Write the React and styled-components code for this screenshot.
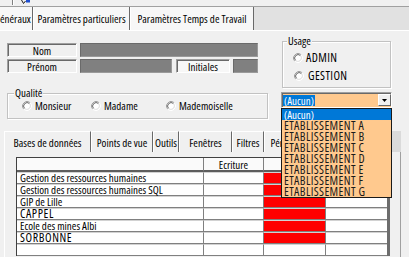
import React from "react";
import styled, { createGlobalStyle } from "styled-components";

const GlobalStyle = createGlobalStyle`
  html, body { margin: 0; padding: 0; background: #f0f0f0; }
  body { font-family: "Open Sans", "Liberation Sans", sans-serif; }
`;

const Frame = styled.div`
  width: 409px;
  height: 257px;
  overflow: hidden;
  background: #f0f0f0;
  font-family: "Open Sans", "Liberation Sans", sans-serif;
  font-stretch: 75%;
  font-size: 11px;
  color: #000;
  display: flex;
  flex-direction: column;
`;

/* upper-case labels: the original bitmap font has wide capitals */
const Caps = styled.span`
  font-size: 12px;
  letter-spacing: ${(p) => p.ls ?? 0.4}px;
`;

/* ---------- top toolbar remnant ---------- */
const Toolbar = styled.div`
  flex: none;
  height: 6px;
  border-bottom: 1px solid #a0a0a0;
  display: flex;
  align-items: flex-start;
  padding-left: 12px;
  gap: 7px;
`;
const ToolSep = styled.div`
  width: 1px;
  height: 5px;
  background: #808080;
  border-right: 1px solid #fff;
`;
const ToolIcon = styled.svg`
  display: block;
`;

/* ---------- top tabs ---------- */
const TabStrip = styled.div`
  flex: none;
  height: 23px;
  display: flex;
  background: #e1e1e1;
  margin-left: -8px;
`;
const TopTab = styled.div`
  width: ${(p) => p.w}px;
  box-sizing: border-box;
  display: flex;
  align-items: center;
  justify-content: center;
  white-space: nowrap;
  background: #f7f7f7;
  border-left: 1px solid #fff;
  border-right: 1px solid #696969;
`;

/* ---------- main panel ---------- */
const Panel = styled.div`
  flex: 1;
  border-top: 1px solid #fff;
  display: flex;
  flex-direction: column;
  min-height: 0;
`;
const Upper = styled.div`
  flex: none;
  height: 88px;
  display: flex;
  align-items: flex-start;
`;
const LeftCol = styled.div`
  margin-left: 7px;
  width: 261px;
  padding-top: 12px;
  display: flex;
  flex-direction: column;
`;
const RightCol = styled.div`
  margin-left: 13px;
  width: 111px;
  padding-top: 10px;
  display: flex;
  flex-direction: column;
`;

const FieldRow = styled.div`
  display: flex;
  height: 14px;
  gap: 3px;
  & + & {
    margin-top: 2px;
  }
`;
const LabelBox = styled.div`
  width: ${(p) => p.w}px;
  margin-left: ${(p) => p.ml || 0}px;
  box-sizing: border-box;
  border-top: 1px solid #a0a0a0;
  border-left: 1px solid #a0a0a0;
  border-right: 1px solid #fff;
  border-bottom: 1px solid #fff;
  box-shadow: inset 1px 1px 0 #696969;
  background: ${(p) => (p.light ? "#f7f7f7" : "#f0f0f0")};
  display: flex;
  align-items: center;
  justify-content: center;
  line-height: 11px;
  white-space: nowrap;
`;
const GrayField = styled.div`
  width: ${(p) => p.w}px;
  margin-left: ${(p) => p.ml || 0}px;
  box-sizing: border-box;
  background: #808080;
  border-top: 1px solid #6a6a6a;
  border-left: 1px solid #6a6a6a;
  border-right: 1px solid #9a9a9a;
  border-bottom: 1px solid #9a9a9a;
`;

/* ---------- group boxes ---------- */
const GroupBox = styled.div`
  position: relative;
  box-sizing: border-box;
  border: 1px solid #c2c2c2;
  box-shadow: inset 1px 1px 0 #fff, 1px 1px 0 #fff;
`;
const GroupTitle = styled.span`
  position: absolute;
  top: -7px;
  left: ${(p) => p.l}px;
  padding: 0 1px;
  background: #f0f0f0;
  line-height: 12px;
  white-space: nowrap;
`;
const QualiteBox = styled(GroupBox)`
  margin-top: 20px;
  height: 26px;
  display: flex;
  align-items: center;
  padding: 0 0 1px 14px;
`;
const UsageBox = styled(GroupBox)`
  margin: 0 1px;
  height: 47px;
  padding: 9px 0 0 10px;
  display: flex;
  flex-direction: column;
  gap: 4px;
`;
const RadioOption = styled.div`
  display: flex;
  align-items: center;
  height: 14px;
  line-height: 14px;
  gap: ${(p) => p.gap || 3}px;
  width: ${(p) => (p.w ? `${p.w}px` : "auto")};
  margin-left: ${(p) => p.ml || 0}px;
  white-space: nowrap;
  flex: none;
`;
const RadioSvg = styled.svg`
  flex: none;
  display: block;
`;

function Radio() {
  return (
    <RadioSvg width="10" height="10" viewBox="0 0 10 10">
      <circle cx="5" cy="5" r="3.2" fill="#fff" />
      <path d="M1.82 8.18A4.5 4.5 0 0 1 8.18 1.82" fill="none" stroke="#a0a0a0" />
      <path d="M2.53 7.47A3.5 3.5 0 0 1 7.47 2.53" fill="none" stroke="#696969" />
      <path d="M8.18 1.82A4.5 4.5 0 0 1 1.82 8.18" fill="none" stroke="#ffffff" />
      <path d="M7.47 2.53A3.5 3.5 0 0 1 2.53 7.47" fill="none" stroke="#e3e3e3" />
    </RadioSvg>
  );
}

/* ---------- combo ---------- */
const ComboWrap = styled.div`
  position: relative;
  margin-top: 4px;
  z-index: 5;
`;
const Combo = styled.div`
  height: 16px;
  box-sizing: border-box;
  border-top: 1px solid #a0a0a0;
  border-left: 1px solid #a0a0a0;
  border-right: 1px solid #fff;
  border-bottom: 1px solid #fff;
  box-shadow: inset 1px 1px 0 #696969;
  background: #ffc98e;
  display: flex;
  align-items: center;
  padding: 0 0 0 1px;
`;
const Selected = styled.span`
  background: #0078d7;
  color: #fff;
  height: 11px;
  line-height: 11px;
  padding: 0 1px;
  white-space: nowrap;
`;
const ComboButton = styled.div`
  margin-left: auto;
  width: 13px;
  height: 12px;
  box-sizing: border-box;
  background: #f0f0f0;
  border-top: 1px solid #fff;
  border-left: 1px solid #fff;
  border-right: 1px solid #696969;
  border-bottom: 1px solid #696969;
  display: flex;
  align-items: center;
  justify-content: center;
`;
const DropList = styled.div`
  position: absolute;
  top: 100%;
  left: 0;
  width: 111px;
  box-sizing: border-box;
  border: 1px solid #1a1a1a;
  background: #ffc98e;
  display: flex;
  flex-direction: column;
`;
const DropItem = styled.div`
  height: 11px;
  line-height: 11px;
  padding-left: 2px;
  white-space: nowrap;
  background: ${(p) => (p.active ? "#0078d7" : "transparent")};
  color: ${(p) => (p.active ? "#fff" : "#1a1a1a")};
`;

/* ---------- inner tabs ---------- */
const InnerTabStrip = styled.div`
  flex: none;
  margin: 12px 0 0 4px;
  width: 397px;
  height: 21px;
  display: flex;
  background: #dadada;
`;
const InnerTab = styled.div`
  width: ${(p) => p.w}px;
  box-sizing: border-box;
  flex: none;
  display: flex;
  align-items: center;
  justify-content: center;
  white-space: nowrap;
  background: #f0f0f0;
  border-top: 1px solid #fff;
  border-left: 1px solid #fff;
  border-right: 1px solid #696969;
`;
const InnerPanel = styled.div`
  flex: 1;
  margin-left: 4px;
  width: 397px;
  box-sizing: border-box;
  border-left: 1px solid #fff;
  border-right: 1px solid #a0a0a0;
  padding: 5px 0 0 11px;
`;

/* ---------- grid ---------- */
const Grid = styled.div`
  display: grid;
  grid-template-columns: 187px 60px 62px 61px;
  width: 374px;
  box-sizing: border-box;
  border-left: 1px solid #404040;
  border-top: 1px solid #404040;
  border-right: 3px solid #6d6d6d;
`;
const HeadCell = styled.div`
  height: 14px;
  box-sizing: border-box;
  background: #fafafa;
  border-bottom: 2px solid #5e5e5e;
  border-right: ${(p) => (p.last ? "none" : "1px solid #808080")};
  display: flex;
  align-items: center;
  justify-content: center;
  white-space: nowrap;
`;
const Cell = styled.div`
  height: 12px;
  box-sizing: border-box;
  background: ${(p) => (p.red ? "#ff0000" : "#ffffff")};
  border-top: 1px solid #d2d2d2;
  border-bottom: 1px solid #808080;
  border-right: ${(p) => (p.last ? "none" : "1px solid #808080")};
  padding-left: 3px;
  line-height: 10px;
  white-space: nowrap;
`;

const bases = [
  { name: "Gestion des ressources humaines" },
  { name: "Gestion des ressources humaines SQL" },
  { name: "GIP de Lille" },
  { name: "CAPPEL", caps: true },
  { name: "Ecole des mines Albi" },
  { name: "SORBONNE", caps: true },
];

const etabs = ["A", "B", "C", "D", "E", "F", "G"];

export default function App() {
  return (
    <Frame>
      <GlobalStyle />
      <Toolbar>
        <ToolSep />
        <ToolIcon width="10" height="5" viewBox="0 0 10 5">
          <path d="M0.5 0 L2.5 3.5 L4.5 1" fill="none" stroke="#202020" strokeWidth="1" />
          <rect x="5" y="0" width="4" height="2.5" fill="#1f4fd0" />
        </ToolIcon>
      </Toolbar>

      <TabStrip>
        <TopTab w={41}>Généraux</TopTab>
        <TopTab w={97}>Paramètres particuliers</TopTab>
        <TopTab w={124}>Paramètres Temps de Travail</TopTab>
      </TabStrip>

      <Panel>
        <Upper>
          <LeftCol>
            <FieldRow>
              <LabelBox w={70}>Nom</LabelBox>
              <GrayField w={178} />
            </FieldRow>
            <FieldRow>
              <LabelBox w={70}>Prénom</LabelBox>
              <GrayField w={92} />
              <LabelBox w={54} ml={1} light>
                Initiales
              </LabelBox>
              <GrayField w={25} />
            </FieldRow>
            <QualiteBox>
              <GroupTitle l={6}>Qualité</GroupTitle>
              <RadioOption w={69}>
                <Radio />
                Monsieur
              </RadioOption>
              <RadioOption w={75}>
                <Radio />
                Madame
              </RadioOption>
              <RadioOption>
                <Radio />
                Mademoiselle
              </RadioOption>
            </QualiteBox>
          </LeftCol>

          <RightCol>
            <UsageBox>
              <GroupTitle l={4}>Usage</GroupTitle>
              <RadioOption>
                <Radio />
                <Caps>ADMIN</Caps>
              </RadioOption>
              <RadioOption ml={1} gap={4}>
                <Radio />
                <Caps>GESTION</Caps>
              </RadioOption>
            </UsageBox>
            <ComboWrap>
              <Combo>
                <Selected>(Aucun)</Selected>
                <ComboButton>
                  <svg width="5" height="3" viewBox="0 0 5 3">
                    <path d="M0 0 H5 L2.5 3 Z" fill="#000" />
                  </svg>
                </ComboButton>
              </Combo>
              <DropList>
                <DropItem active>(Aucun)</DropItem>
                {etabs.map((l) => (
                  <DropItem key={l}>
                    <Caps>ETABLISSEMENT {l}</Caps>
                  </DropItem>
                ))}
              </DropList>
            </ComboWrap>
          </RightCol>
        </Upper>

        <InnerTabStrip>
          <InnerTab w={87}>Bases de données</InnerTab>
          <InnerTab w={62}>Points de vue</InnerTab>
          <InnerTab w={26}>Outils</InnerTab>
          <InnerTab w={53}>Fenêtres</InnerTab>
          <InnerTab w={32}>Filtres</InnerTab>
          <InnerTab w={46}>Périodes</InnerTab>
        </InnerTabStrip>

        <InnerPanel>
          <Grid>
            <HeadCell />
            <HeadCell>Ecriture</HeadCell>
            <HeadCell />
            <HeadCell last />
            {bases.map((b) => (
              <React.Fragment key={b.name}>
                <Cell>{b.caps ? <Caps ls={0.6}>{b.name}</Caps> : b.name}</Cell>
                <Cell />
                <Cell red />
                <Cell last />
              </React.Fragment>
            ))}
            <Cell />
            <Cell />
            <Cell />
            <Cell last />
          </Grid>
        </InnerPanel>
      </Panel>
    </Frame>
  );
}
